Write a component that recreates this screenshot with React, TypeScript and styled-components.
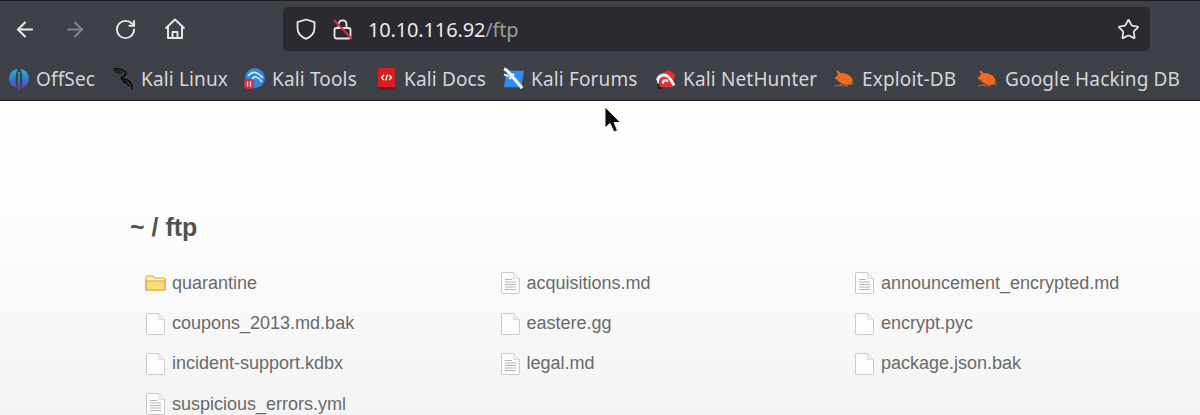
import React from "react";
import styled, { createGlobalStyle } from "styled-components";
import { ArrowLeft, ArrowRight, RotateCw, Star } from "lucide-react";

const GlobalStyle = createGlobalStyle`
  html, body { margin: 0; padding: 0; background: #fff; overflow: hidden; }
  body { width: 1200px; height: 415px; }
`;

const Page = styled.div`
  width: 1200px;
  height: 415px;
  position: relative;
  overflow: hidden;
  display: flex;
  flex-direction: column;
`;

const Chrome = styled.header`
  height: 101px;
  flex: none;
  box-sizing: border-box;
  background: #3f4148;
  border-top: 1px solid #1d1d20;
  border-bottom: 1px solid #17171a;
  display: flex;
  flex-direction: column;
`;

const Toolbar = styled.div`
  height: 56px;
  flex: none;
  box-sizing: border-box;
  padding: 6px 50px 0 13px;
  display: flex;
  align-items: flex-start;
`;

const NavButtons = styled.div`
  width: 270px;
  height: 44px;
  flex: none;
  display: flex;
  align-items: center;
  gap: 26px;
`;

const NavIcon = styled.span<{ $dim?: boolean }>`
  width: 24px;
  height: 24px;
  display: flex;
  align-items: center;
  justify-content: center;
  color: ${(p) => (p.$dim ? "#85868b" : "#e9e9ea")};
`;

const UrlBar = styled.div`
  flex: 1;
  height: 44px;
  box-sizing: border-box;
  background: #2b2a30;
  border-radius: 5px;
  display: flex;
  align-items: center;
  padding: 0 10px 0 12px;
  color: #e9e9ea;
`;

const UrlText = styled.div`
  margin-left: 14px;
  font: 20px "Noto Sans", sans-serif;
  letter-spacing: -0.15px;
  color: #e9e9ea;
  flex: 1;
`;

const UrlPath = styled.span`
  color: #9a9a9f;
`;

const LockWrap = styled.span`
  margin-left: 15px;
  display: flex;
`;

const Bookmarks = styled.nav`
  height: 44px;
  display: flex;
  align-items: center;
  padding: 0 0 0 8px;
`;

const Bookmark = styled.div<{ $w: number }>`
  width: ${(p) => p.$w}px;
  flex: none;
  display: flex;
  align-items: center;
  gap: 7px;
  font: 19px "Noto Sans", sans-serif;
  letter-spacing: 0.15px;
  white-space: nowrap;
  color: #d6d6d8;
`;

const FavBox = styled.span`
  width: 21px;
  height: 24px;
  flex: none;
  display: flex;
  align-items: center;
  justify-content: center;
`;

const Content = styled.main`
  flex: 1;
  background: linear-gradient(#ffffff 0%, #fefefe 25%, #f3f3f3 100%);
  padding: 110px 0 0 130px;
  font-family: "Liberation Sans", Arial, sans-serif;
`;

const Heading = styled.h1`
  margin: 0;
  font-size: 25px;
  line-height: 32px;
  font-weight: 700;
  color: #525252;
`;

const FileGrid = styled.ul`
  list-style: none;
  margin: 20px 0 0 0;
  padding: 0 0 0 15px;
  display: grid;
  grid-template-columns: repeat(3, 354.5px);
  grid-auto-rows: 40.4px;
`;

const FileItem = styled.li`
  display: flex;
  align-items: center;
  gap: 6px;
  height: 40.4px;
  font-size: 18px;
  color: #6a6a6a;
`;

const IconBox = styled.span`
  width: 21px;
  height: 24px;
  flex: none;
  display: flex;
  align-items: center;
`;

const Cursor = styled.svg`
  position: absolute;
  left: 603px;
  top: 106px;
`;

const Shield = () => (
  <svg width="22" height="24" viewBox="0 0 22 24" fill="none" stroke="#e9e9ea" strokeWidth="1.8">
    <path d="M11 2.5 L19.5 5.2 V11 C19.5 16 16 19.8 11 21.8 C6 19.8 2.5 16 2.5 11 V5.2 Z" strokeLinejoin="round" />
  </svg>
);

const BrokenLock = () => (
  <svg width="22" height="24" viewBox="0 0 22 24" fill="none">
    <path d="M6.5 11 V7.5 C6.5 2 14.5 2 14.5 7.5 V11" stroke="#e9e9ea" strokeWidth="1.8" />
    <rect x="2.5" y="11" width="16" height="10.5" rx="2" stroke="#e9e9ea" strokeWidth="1.8" />
    <path d="M2 3 L20 22" stroke="#e22850" strokeWidth="2" />
  </svg>
);

const Home = () => (
  <svg width="24" height="24" viewBox="0 0 24 24" fill="none" stroke="#e9e9ea" strokeWidth="1.9" strokeLinejoin="round">
    <path d="M2.5 11.5 L12 2.5 L21.5 11.5 M5 9.5 V21 H19 V9.5" />
    <path d="M9.5 21 V15 H14.5 V21" />
  </svg>
);

const OffSecIcon = () => (
  <svg width="20" height="24" viewBox="0 0 20 24">
    <defs>
      <linearGradient id="offsec" x1="0" y1="0" x2="0" y2="1">
        <stop offset="0" stopColor="#27b9d8" />
        <stop offset="0.55" stopColor="#2f7fd0" />
        <stop offset="1" stopColor="#7a35b8" />
      </linearGradient>
    </defs>
    <path d="M8.5 2 C3 3 0 7 0 12 C0 16 3 20 8 21 C6 16 6 8 8.5 2 Z" fill="url(#offsec)" />
    <path d="M11.5 2 C17 3 20 7 20 12 C20 16 17 20 12 21 C14 16 14 8 11.5 2 Z" fill="url(#offsec)" />
    <path d="M9.2 5 H10.8 V23 H9.2 Z" fill="url(#offsec)" />
  </svg>
);

const KaliIcon = () => (
  <svg width="24" height="26" viewBox="0 0 24 26" fill="none" stroke="#0b0b0d" strokeWidth="1.8" strokeLinecap="round">
    <path d="M1 1 C6 1 11 2 14 5 C16 8 13 10 10 11 C8 13 13 13 16 14 C20 15 21 19 22 24" />
    <path d="M1 3 C5 3 8 4 10 6 M3 5 C5 5 7 6 8 7" strokeWidth="1.2" />
    <path d="M13 15 C15 16.5 16.5 17 18 21 M10 13 C12 15 13 17 13.5 18" strokeWidth="1.3" />
  </svg>
);

const ToolsIcon = () => (
  <svg width="21" height="22" viewBox="0 0 21 22">
    <circle cx="11" cy="10" r="10" fill="#2f86e0" />
    <path d="M4 8 C9 2 13 4 19 10 M8 11 C11 7 14 9 18 14" stroke="#d9ecff" strokeWidth="1.6" fill="none" />
    <rect x="0" y="11" width="10" height="10" rx="4" fill="#d92f3c" />
    <path d="M3.5 13.5 V18.5 M6.5 13.5 V18.5" stroke="#fff" strokeWidth="1.3" />
  </svg>
);

const DocsIcon = () => (
  <svg width="20" height="24" viewBox="0 0 20 24">
    <rect x="1" y="1" width="17" height="19" rx="1.5" fill="#d81e1e" />
    <path d="M2 20 H18 V23 H3 Q1 23 1 20 Z" fill="#6e1c24" />
    <path d="M7 8 L4.5 10.5 L7 13 M12 8 L14.5 10.5 L12 13 M10.4 7.5 L8.8 13.5" stroke="#fff" strokeWidth="1.3" fill="none" />
  </svg>
);

const ForumsIcon = () => (
  <svg width="23" height="24" viewBox="0 0 23 24">
    <path d="M4 3 H23 L20 21 H1 Z" fill="#2d8cf0" />
    <path d="M1 1 C5 2 7 5 9 8 L21 22" stroke="#f3f3f3" strokeWidth="3.4" fill="none" />
    <path d="M12 6 L7 12 M1 7 L6 9" stroke="#f3f3f3" strokeWidth="2.2" />
  </svg>
);

const NetHunterIcon = () => (
  <svg width="23" height="24" viewBox="0 0 23 24" fill="none">
    <path d="M4 8 L15 2 L22 7 L19 21 H6 Z" fill="#e0303a" />
    <path d="M3 17 C1 9 10 5 15 10 C18 13 19 16 21 19" stroke="#f1f1f1" strokeWidth="3.2" />
    <path d="M9 17 C8 13 12 12 14 15" stroke="#f1f1f1" strokeWidth="2.4" />
    <path d="M1 13 L4 22 H8" stroke="#181818" strokeWidth="1.2" />
  </svg>
);

const BugIcon = () => (
  <svg width="21" height="18" viewBox="0 0 21 18" fill="none">
    <ellipse cx="10.5" cy="9" rx="8.5" ry="5.5" transform="rotate(22 10.5 9)" fill="#ec6a22" />
    <path d="M1 16 L8 14.5 M6 15.5 L14 16 M14 14.5 L20 14" stroke="#b9683a" strokeWidth="1.1" />
    <path d="M3 1 L7 5 M1 8 L6 9" stroke="#ec6a22" strokeWidth="2" />
  </svg>
);

const FolderIcon = () => (
  <svg width="21" height="24" viewBox="0 0 21 24">
    <path d="M1 6.5 Q1 5 2.5 5 H8 L9.5 7 H19 Q20 7 20 8 V19 H1 Z" fill="#fbeeb9" stroke="#dda63a" strokeWidth="1.2" />
    <path d="M1.2 10 H19.8 V19 H1.2 Z" fill="#f9dc7c" stroke="#dda63a" strokeWidth="1" />
  </svg>
);

const DocIcon = ({ lines }: { lines?: boolean }) => (
  <svg width="21" height="24" viewBox="0 0 21 24" fill="none">
    <path d="M1.5 2.5 Q1.5 1.5 2.5 1.5 H13.5 L19.5 7.5 V21.5 Q19.5 22.5 18.5 22.5 H2.5 Q1.5 22.5 1.5 21.5 Z" fill="#fdfdfd" stroke="#c9c9c9" />
    <path d="M13.5 1.5 V7.5 H19.5" fill="#eeeeee" stroke="#dddddd" />
    {lines && (
      <path d="M5 8.5 H12 M5 11 H16 M5 13.5 H16 M5 16 H16 M5 18.5 H16" stroke="#b5b5b5" strokeWidth="1" />
    )}
  </svg>
);

const bookmarks: { label: string; w: number; icon: React.ReactNode }[] = [
  { label: "OffSec", w: 105, icon: <OffSecIcon /> },
  { label: "Kali Linux", w: 131, icon: <KaliIcon /> },
  { label: "Kali Tools", w: 132, icon: <ToolsIcon /> },
  { label: "Kali Docs", w: 127, icon: <DocsIcon /> },
  { label: "Kali Forums", w: 152, icon: <ForumsIcon /> },
  { label: "Kali NetHunter", w: 179, icon: <NetHunterIcon /> },
  { label: "Exploit-DB", w: 143, icon: <BugIcon /> },
  { label: "Google Hacking DB", w: 210, icon: <BugIcon /> },
];

const files: { name: string; kind: "folder" | "text" | "blank" }[] = [
  { name: "quarantine", kind: "folder" },
  { name: "acquisitions.md", kind: "text" },
  { name: "announcement_encrypted.md", kind: "text" },
  { name: "coupons_2013.md.bak", kind: "blank" },
  { name: "eastere.gg", kind: "blank" },
  { name: "encrypt.pyc", kind: "blank" },
  { name: "incident-support.kdbx", kind: "blank" },
  { name: "legal.md", kind: "text" },
  { name: "package.json.bak", kind: "blank" },
  { name: "suspicious_errors.yml", kind: "text" },
];

const App = () => {
  return (
    <Page>
      <GlobalStyle />
      <Chrome>
        <Toolbar>
          <NavButtons>
            <NavIcon><ArrowLeft size={25} strokeWidth={2} /></NavIcon>
            <NavIcon $dim><ArrowRight size={25} strokeWidth={2} /></NavIcon>
            <NavIcon><RotateCw size={23} strokeWidth={2} /></NavIcon>
            <NavIcon><Home /></NavIcon>
          </NavButtons>
          <UrlBar>
            <Shield />
            <LockWrap><BrokenLock /></LockWrap>
            <UrlText>
              10.10.116.92<UrlPath>/ftp</UrlPath>
            </UrlText>
            <Star size={23} strokeWidth={1.8} />
          </UrlBar>
        </Toolbar>
        <Bookmarks>
          {bookmarks.map((b) => (
            <Bookmark key={b.label} $w={b.w}>
              <FavBox>{b.icon}</FavBox>
              {b.label}
            </Bookmark>
          ))}
        </Bookmarks>
      </Chrome>
      <Content>
        <Heading>~ / ftp</Heading>
        <FileGrid>
          {files.map((f) => (
            <FileItem key={f.name}>
              <IconBox>
                {f.kind === "folder" ? <FolderIcon /> : <DocIcon lines={f.kind === "text"} />}
              </IconBox>
              {f.name}
            </FileItem>
          ))}
        </FileGrid>
      </Content>
      <Cursor width="20" height="30" viewBox="0 0 20 30">
        <path d="M2 1 V22 L7 17.5 L11 26 L14.5 24.5 L11 16.5 H17.5 Z" fill="#0a0a0a" stroke="#f4f4f4" strokeWidth="1" />
      </Cursor>
    </Page>
  );
};

export default App;
